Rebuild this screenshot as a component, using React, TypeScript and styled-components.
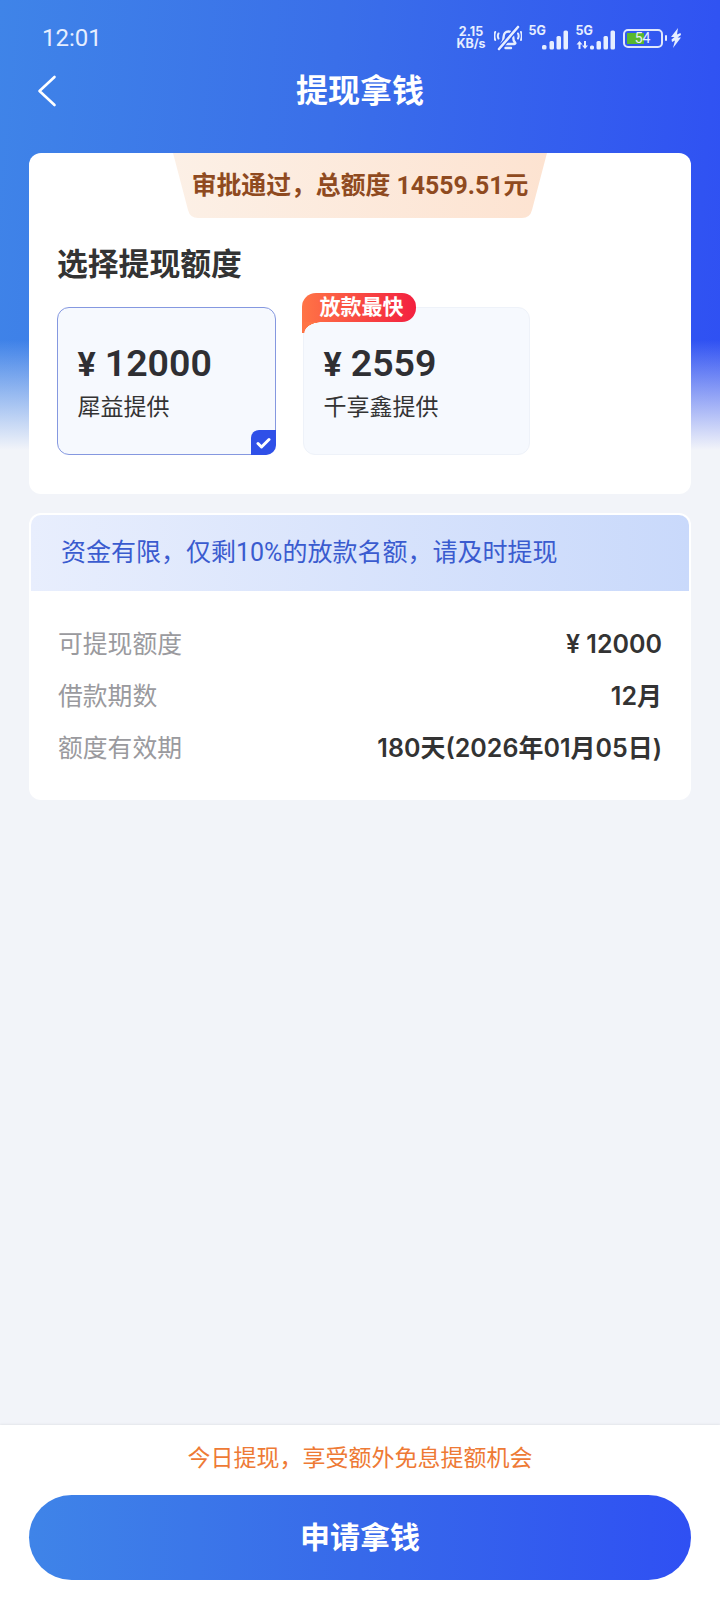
import styled, { createGlobalStyle } from 'styled-components';

const GlobalStyle = createGlobalStyle`
  html, body {
    margin: 0;
    padding: 0;
    background: #f2f4f9;
  }
  * {
    box-sizing: border-box;
  }
`;

const details = [
  { label: '可提现额度', value: '¥ 12000' },
  { label: '借款期数', value: '12月' },
  { label: '额度有效期', value: '180天(2026年01月05日)' },
];

const Signal = ({ arrows }: { arrows?: boolean }) => (
  <svg width="40" height="22" viewBox="0 0 40 22" fill="#e6eeff">
    {arrows ? (
      <path d="M3.500 13 0.500 16.500H2.500V21H4.500V16.500H6.500Z M9 21 12 17.500H10V13H8V17.500H6Z" />
    ) : (
      <rect x="13" y="17" width="4.500" height="4.500" rx="1.500" />
    )}
    {arrows && <rect x="14" y="17.500" width="4" height="4" rx="1.500" />}
    <rect x="20.500" y="13" width="4.500" height="8.500" rx="1.500" />
    <rect x="27.500" y="8" width="4.500" height="13.500" rx="1.500" />
    <rect x="34.500" y="2.500" width="4.500" height="19" rx="1.500" />
  </svg>
);

const MutedBell = () => (
  <svg width="28" height="26" viewBox="0 0 28 26" fill="none" stroke="#e6eeff" strokeWidth="2.400" strokeLinecap="round">
    <path d="M8 17.500c1.500-1.500 1.600-3.500 1.600-5.500 0-3 2-5.500 4.800-5.500s4.800 2.500 4.800 5.500c0 2 .2 4 1.800 5.500.6.800.2 1.500-.6 1.500H8.600c-.8 0-1.200-.8-.6-1.500Z" />
    <path d="M11.500 23h5.500" />
    <path d="M4.500 8.500c-.8 1.500-.8 3.500 0 5M1.200 7c-1 2.500-1 5.500 0 8M24 8.500c.8 1.500.8 3.500 0 5M27 7c1 2.500 1 5.500 0 8" strokeWidth="2" />
    <path d="M5 24 24 2" stroke="#2f5bec" strokeWidth="5" />
    <path d="M5 24 24 2" strokeWidth="2.600" />
  </svg>
);

const App = () => {
  return (
    <Page>
      <GlobalStyle />
      <StatusBar>
        <Clock>12:01</Clock>
        <StatusIcons>
          <Speed>
            2.15
            <br />
            KB/s
          </Speed>
          <MutedBell />
          <SignalGroup>
            <NetLabel>5G</NetLabel>
            <Signal />
          </SignalGroup>
          <SignalGroup>
            <NetLabel>5G</NetLabel>
            <Signal arrows />
          </SignalGroup>
          <Battery>54</Battery>
          <BatteryCap />
          <svg width="12" height="20" viewBox="0 0 12 20" fill="#e6eeff">
            <path d="M8 0 1 9h3.500L1.500 11.500 2 14l3-1.500L3 20l8-10.500H7.500L11 7l-.5-2L7 6.500Z" />
          </svg>
        </StatusIcons>
      </StatusBar>

      <NavBar>
        <BackButton aria-label="返回">
          <svg width="20" height="32" viewBox="0 0 20 32" fill="none" stroke="#fff" strokeWidth="2.600" strokeLinecap="round" strokeLinejoin="round">
            <path d="M17.500 2 2.500 16l15 14" />
          </svg>
        </BackButton>
        <Title>提现拿钱</Title>
      </NavBar>

      <Main>
        <QuotaCard>
          <Ribbon>审批通过，总额度 14559.51元</Ribbon>
          <SectionTitle>选择提现额度</SectionTitle>
          <Options>
            <Option $selected $width={219}>
              <Amount>
                <Yen>¥</Yen>12000
              </Amount>
              <Provider>犀益提供</Provider>
              <CheckMark>
                <svg width="15" height="12" viewBox="0 0 15 12" fill="none" stroke="#fff" strokeWidth="3" strokeLinecap="round" strokeLinejoin="round">
                  <path d="M2 6.500 5.500 10 13 2.500" />
                </svg>
              </CheckMark>
            </Option>
            <Option $width={227}>
              <Badge>放款最快</Badge>
              <Amount>
                <Yen>¥</Yen>2559
              </Amount>
              <Provider>千享鑫提供</Provider>
            </Option>
          </Options>
        </QuotaCard>

        <InfoCard>
          <Notice>资金有限，仅剩10%的放款名额，请及时提现</Notice>
          <Rows>
            {details.map((row) => (
              <Row key={row.label}>
                <RowLabel>{row.label}</RowLabel>
                <RowValue>{row.value}</RowValue>
              </Row>
            ))}
          </Rows>
        </InfoCard>
      </Main>

      <Footer>
        <Hint>今日提现，享受额外免息提额机会</Hint>
        <ApplyButton>申请拿钱</ApplyButton>
      </Footer>
    </Page>
  );
};

const Page = styled.div`
  width: 720px;
  height: 1600px;
  overflow: hidden;
  display: flex;
  flex-direction: column;
  font-family: Roboto, 'Noto Sans CJK SC', sans-serif;
  background:
    linear-gradient(180deg, rgba(242, 244, 249, 0) 340px, #f2f4f9 450px) no-repeat,
    linear-gradient(95deg, #3f84e8 0%, #3a6fe9 45%, #2f50f3 100%) 0 0 / 100% 450px no-repeat,
    #f2f4f9;
`;

const StatusBar = styled.div`
  height: 24px;
  margin-top: 26px;
  padding: 0 38px 0 42px;
  display: flex;
  align-items: center;
  justify-content: space-between;
  color: #e6eeff;
`;

const Clock = styled.span`
  font-size: 24px;
  font-weight: 400;
`;

const StatusIcons = styled.div`
  display: flex;
  align-items: center;
  gap: 7px;
`;

const Speed = styled.span`
  width: 33px;
  margin-right: -1px;
  font-family: Inter, sans-serif;
  font-size: 12.500px;
  line-height: 12px;
  font-weight: 700;
  text-align: center;
`;

const SignalGroup = styled.div`
  position: relative;
  width: 40px;
  height: 24px;
  display: flex;
  align-items: flex-end;
`;

const NetLabel = styled.span`
  position: absolute;
  left: 0;
  top: -2px;
  font-family: Inter, sans-serif;
  font-size: 12.500px;
  line-height: 13px;
  font-weight: 700;
`;

const Battery = styled.div`
  width: 40px;
  height: 19px;
  border: 2px solid #dfe7fb;
  border-radius: 5px;
  font-size: 14px;
  line-height: 15px;
  text-align: center;
  color: #e6eeff;
  background: linear-gradient(90deg, #58b82e 0 54%, transparent 54%) 2px 2px / calc(100% - 4px) calc(100% - 4px) no-repeat;
`;

const BatteryCap = styled.span`
  width: 2.500px;
  height: 6px;
  margin: 0 -4px 0 -5px;
  border-radius: 1px;
  background: #e6eeff;
`;

const NavBar = styled.header`
  height: 44px;
  margin-top: 18px;
  padding: 0 0 0 37px;
  display: grid;
  grid-template-columns: 1fr auto 1fr;
  align-items: center;
`;

const BackButton = styled.button`
  justify-self: start;
  width: 20px;
  height: 32px;
  padding: 0;
  border: 0;
  background: none;
`;

const Title = styled.h1`
  margin: 0 0 0 -37px;
  font-size: 32px;
  line-height: 46px;
  font-weight: 700;
  color: #fff;
`;

const Main = styled.main`
  flex: 1;
  padding: 41px 29px 0;
  display: flex;
  flex-direction: column;
  gap: 19px;
`;

const QuotaCard = styled.section`
  height: 341px;
  padding: 0 28px;
  display: flex;
  flex-direction: column;
  border-radius: 12px;
  background: #fff;
`;

const Ribbon = styled.div`
  width: 374px;
  height: 65px;
  flex: none;
  align-self: center;
  font-size: 24.850px;
  line-height: 65px;
  font-weight: 700;
  text-align: center;
  white-space: nowrap;
  color: #8f4a20;
  background: linear-gradient(90deg, #fcf0e6, #fde3d1);
  clip-path: path('M0 0 H374 L359 57 Q357 65 349 65 H25 Q17 65 15 57 Z');
`;

const SectionTitle = styled.h2`
  margin: 27px 0 22px;
  font-size: 30.800px;
  line-height: 40px;
  font-weight: 700;
  color: #333;
`;

const Options = styled.div`
  display: flex;
  gap: 27px;
`;

const Option = styled.div<{ $selected?: boolean; $width: number }>`
  position: relative;
  width: ${(props) => props.$width}px;
  height: 148px;
  padding: 32px 19.500px 0;
  border-radius: 12px;
  background: #f6f9fe;
  border: 1.500px solid ${(props) => (props.$selected ? '#8598e0' : '#eef2f9')};
`;

const Amount = styled.div`
  font-size: 37.500px;
  line-height: 46px;
  font-weight: 600;
  color: #2f2f33;
  white-space: nowrap;
`;

const Yen = styled.span`
  margin-right: 9px;
  font-size: 34px;
  font-weight: 700;
`;

const Provider = styled.div`
  margin-top: 5px;
  font-size: 23px;
  line-height: 32px;
  color: #333;
`;

const CheckMark = styled.span`
  position: absolute;
  right: -1px;
  bottom: -1px;
  width: 25px;
  height: 25px;
  display: flex;
  align-items: center;
  justify-content: center;
  border-radius: 8px 0 10px 0;
  background: #2f50e8;
`;

const Badge = styled.span`
  position: absolute;
  left: -2px;
  top: -15px;
  width: 114px;
  height: 29px;
  padding-left: 5px;
  font-size: 21px;
  line-height: 28px;
  font-weight: 700;
  text-align: center;
  color: #fff;
  border-radius: 14px 14px 14px 0;
  background: linear-gradient(90deg, #ff7446, #f3203f);

  &::after {
    content: '';
    position: absolute;
    left: 0;
    top: 100%;
    width: 20px;
    height: 11px;
    background: radial-gradient(ellipse 18px 11px at 100% 100%, transparent 96%, #ff7446 100%);
  }
`;

const InfoCard = styled.section`
  height: 287px;
  padding: 2px;
  border-radius: 12px;
  background: #fff;
`;

const Notice = styled.div`
  height: 76px;
  padding-left: 30px;
  font-size: 25px;
  line-height: 76px;
  color: #3a5bcf;
  border-radius: 10px 10px 0 0;
  background: linear-gradient(90deg, #e8eefd, #c9d9fb);
`;

const Rows = styled.div`
  padding: 25px 27px 0;
`;

const Row = styled.div`
  height: 52px;
  display: flex;
  align-items: center;
  justify-content: space-between;
`;

const RowLabel = styled.span`
  font-size: 24.800px;
  color: #9a9a9e;
`;

const RowValue = styled.span`
  margin-top: 4px;
  font-family: Inter, 'Noto Sans CJK SC', sans-serif;
  font-size: 25px;
  line-height: 32px;
  font-weight: 600;
  color: #333;
`;

const Footer = styled.footer`
  height: 175px;
  padding: 17px 29px 0;
  display: flex;
  flex-direction: column;
  align-items: center;
  background: #fff;
  box-shadow: 0 -1px 2px rgba(0, 0, 0, 0.06);
`;

const Hint = styled.div`
  margin-bottom: 19px;
  font-size: 23px;
  line-height: 34px;
  color: #ee7a35;
`;

const ApplyButton = styled.button`
  width: 100%;
  height: 85px;
  padding: 0 0 6px;
  border: 0;
  border-radius: 43px;
  font-family: inherit;
  font-size: 30px;
  font-weight: 700;
  color: #fff;
  background: linear-gradient(90deg, #3f84e8, #3769ea 50%, #2f50f3);
`;

export default App;
